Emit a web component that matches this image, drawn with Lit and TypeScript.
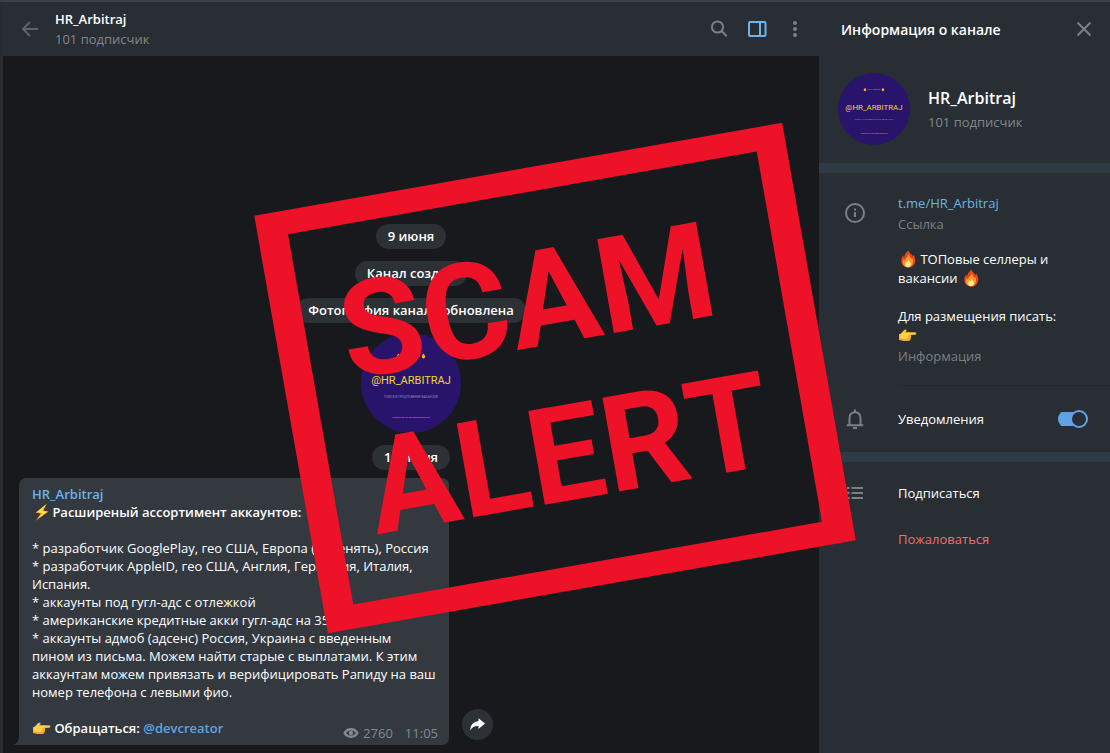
import { LitElement, html, css, svg } from "lit";
import { customElement, property, state } from "lit/decorators.js";

@customElement("emoji-glyph")
class EmojiGlyph extends LitElement {
  @property() name = "fire";

  static styles = css`
    :host {
      display: inline-block;
      width: 19px;
      height: 18px;
      vertical-align: -4px;
    }
    :host([name="bolt"]) {
      width: 17px;
    }
    svg {
      display: block;
      width: 19px;
      height: 18px;
    }
  `;

  render() {
    const shapes: Record<string, unknown> = {
      fire: svg`
        <path fill="#e8471c" d="M10.400 0.600c.5 2.300 3 3.500 4.300 5.600.3-.5.4-1 .4-1.600 1.700 2 2.300 4.200 2.100 6.600-.3 3.700-3 6.300-6.800 6.400-3.900.1-7-2.600-7.100-6.300C3.200 8.700 4.200 7 5.200 5.300c.1 1 .4 1.700 1 2.200C6.300 4.800 8 2.900 10.400.6z"/>
        <path fill="#fb9a2a" d="M10.900 4.500c.2 2 2 3.200 3 4.700.3-.4.5-.7.6-1.100 1.600 4.200-.2 8.900-4.300 9.100-3.700.1-6-2.700-5.300-6.100.2-.9.5-1.600 1-2.300.2 1 .5 1.500 1 1.900.3-2.500 2.600-3.400 4-6.200z"/>
        <path fill="#ffe98a" d="M10.500 9.500c.4 1.600 2.700 2.800 2.500 5-.2 1.800-1.400 2.700-3 2.700-1.700 0-2.900-1.100-2.900-2.800 0-1.500 1-2.100 1.700-3.100.3.7.5.9.8 1.100.3-1 .7-1.700.9-2.900z"/>`,
      bolt: svg`
        <path fill="#f6a623" d="M15 0.500 3.600 9.700l5.200.8-5 7.300L16.500 8.400l-5.200-.9z"/>
        <path fill="#ffe14d" d="M13.800 1.800 4.900 9.100l5.200.8-3.500 5.300 8.400-6.400-5-.8z"/>`,
      hand: svg`
        <path fill="#f2a928" d="M1 8.200c1.600-.4 2.500-1.500 3.700-2.800 1-1 2.500-2.300 3.600-1.700.7.5.2 1.600-.5 2.400l9.500.1c1.500.1 1.500 2.300 0 2.500l-4.700.3c1 .4 1 1.700.1 2.100.7.7.3 1.700-.4 2 .3.900-.2 1.700-1.300 1.800-3 .2-5.700.2-7.600-.4-.9-.3-1.500-.6-2.400-.6z"/>
        <path fill="#ffcf55" d="M1.600 8.600c1.700-.6 2.800-1.800 3.900-3 .9-.9 1.800-1.500 2.300-1.300.2.5-.6 1.400-1.600 2.700l10.900.1c.8.1.8 1 0 1.100l-5.600.4c-.6.8-1.900.7-2.500.5 1 .6 2 .7 2.700.7-.2 1-1.600.9-2.500.6.7.7 1.300.9 1.900.9-.4.8-1.300.8-2.200.7.4.5.8.7 1.200.8-2.500.2-4.500.2-6.200-.4-.8-.3-1.500-.5-2.300-.5z"/>`,
    };
    return html`<svg viewBox="0 0 19 18" aria-hidden="true">${shapes[this.name]}</svg>`;
  }
}

@customElement("channel-avatar")
class ChannelAvatar extends LitElement {
  static styles = css`
    :host {
      display: block;
      border-radius: 50%;
      overflow: hidden;
      background: #28156b;
    }
    svg {
      display: block;
      width: 100%;
      height: 100%;
    }
    text {
      font-family: Roboto, sans-serif;
      text-anchor: middle;
    }
    .handle {
      font-size: 11px;
      fill: #efd72f;
    }
    .soft {
      font-size: 3px;
      fill: #9184bd;
    }
    .tiny {
      font-size: 2px;
      fill: #d9d2ee;
    }
    .gold {
      fill: #dcae45;
    }
  `;

  render() {
    return html`<svg viewBox="0 0 100 100">
      <path fill="#ffae2b" d="M37.500 20.500l1.700 2.500c.2 1.500-.6 2.400-1.700 2.400s-1.900-.9-1.700-2.400z" />
      <path fill="#ffae2b" d="M62.500 20.500l1.700 2.500c.2 1.500-.6 2.400-1.700 2.400s-1.900-.9-1.700-2.400z" />
      <text class="soft" x="50" y="24">ТОП РАБОТА</text>
      <text class="handle" x="50" y="51">@HR_ARBITRAJ</text>
      <text class="soft" x="50" y="65">ПОИСК И ПРЕДЛОЖЕНИЕ ВАКАНСИЙ</text>
      <text class="tiny gold" x="50" y="85">ПИШИТЕ ПО КОНТАКТАМ В ОПИСАНИИ</text>
    </svg>`;
  }
}

@customElement("chat-view")
class ChatView extends LitElement {
  static styles = css`
    :host {
      display: flex;
      flex-direction: column;
      min-width: 0;
      background: #18191d;
      border-left: 3px solid #282b30;
    }
    .bar {
      display: flex;
      align-items: center;
      height: 54px;
      padding: 0 14px 0 16px;
      background: #282e33;
      box-sizing: border-box;
    }
    button {
      display: grid;
      place-items: center;
      padding: 0;
      border: 0;
      background: none;
      color: #7b8084;
    }
    .back {
      width: 22px;
      height: 22px;
      margin-right: 14px;
      color: #5e6367;
    }
    .who {
      flex: 1;
    }
    h1 {
      margin: 0;
      font-size: 13px;
      line-height: 20px;
      font-weight: 600;
      color: #ffffff;
    }
    .sub {
      margin: 0;
      font-size: 13px;
      line-height: 20px;
      color: #82878b;
    }
    .tools {
      display: flex;
      gap: 18px;
    }
    .tools button {
      width: 20px;
      height: 20px;
    }
    .tools .on {
      color: #6bb5ea;
    }
    .feed {
      flex: 1;
      display: flex;
      flex-direction: column;
      justify-content: flex-end;
      align-items: center;
      gap: 12px;
      padding-bottom: 8px;
    }
    .pill {
      padding: 0 12px;
      border-radius: 13px;
      background: #2c3136;
      color: #ffffff;
      font-size: 13px;
      font-weight: 600;
      line-height: 25px;
    }
    channel-avatar {
      width: 100px;
      height: 100px;
      margin-top: -2px;
    }
    .row {
      align-self: stretch;
      display: flex;
      align-items: flex-end;
      gap: 13px;
      margin: -4px 16px 0 10px;
    }
    .message {
      display: flex;
      align-items: flex-end;
    }
    .tail {
      display: block;
      width: 6px;
      height: 8px;
      fill: #33393f;
    }
    .bubble {
      width: 406px;
      padding: 7px 11px 3px 13px;
      border-radius: 7px 7px 7px 0;
      background: #33393f;
      color: #ffffff;
      font-size: 13px;
      line-height: 18px;
    }
    .bubble p {
      margin: 0;
    }
    .bubble .gap {
      margin-top: 18px;
    }
    a {
      color: #5da5e8;
      text-decoration: none;
    }
    .author,
    .strong {
      font-weight: 600;
    }
    .author {
      color: #6ab3e8;
    }
    .last {
      display: flex;
      justify-content: space-between;
      height: 23px;
      margin-top: 18px;
    }
    .meta {
      display: flex;
      align-items: center;
      align-self: flex-end;
      gap: 4px;
      color: #828a91;
    }
    time {
      margin-left: 8px;
    }
    .share {
      width: 31px;
      height: 31px;
      margin-bottom: 5px;
      border-radius: 50%;
      background: #2c3136;
      color: #ffffff;
    }
  `;

  render() {
    return html`
      <header class="bar">
        <button class="back" aria-label="Назад">
          <svg width="18" height="18" viewBox="0 0 18 18" fill="none" stroke="currentColor" stroke-width="2">
            <path d="M9 2 2 9l7 7M2 9h15" />
          </svg>
        </button>
        <div class="who">
          <h1>HR_Arbitraj</h1>
          <p class="sub">101 подписчик</p>
        </div>
        <div class="tools">
          <button aria-label="Поиск">
            <svg width="20" height="20" viewBox="0 0 20 20" fill="none" stroke="currentColor" stroke-width="2">
              <circle cx="8.500" cy="8" r="5.600" />
              <path d="m12.500 12 5.300 5.300" />
            </svg>
          </button>
          <button class="on" aria-label="Панель">
            <svg width="20" height="20" viewBox="0 0 20 20" fill="none" stroke="currentColor" stroke-width="2">
              <rect x="2" y="3" width="16.500" height="14" rx="1" />
              <path d="M13 3v14" />
            </svg>
          </button>
          <button aria-label="Меню">
            <svg width="20" height="20" viewBox="0 0 20 20" fill="currentColor">
              <circle cx="10" cy="4" r="2" />
              <circle cx="10" cy="10" r="2" />
              <circle cx="10" cy="16" r="2" />
            </svg>
          </button>
        </div>
      </header>
      <main class="feed">
        <div class="pill">9 июня</div>
        <div class="pill">Канал создан</div>
        <div class="pill">Фотография канала обновлена</div>
        <channel-avatar></channel-avatar>
        <div class="pill">10 июня</div>
        <div class="row">
          <article class="message">
            <svg class="tail" viewBox="0 0 6 8"><path d="M6 0v8H0C3.500 6.500 6 4 6 0z" /></svg>
            <div class="bubble">
              <p class="author">HR_Arbitraj</p>
              <p class="strong"><emoji-glyph name="bolt"></emoji-glyph> Расширеный ассортимент аккаунтов:</p>
              <p class="gap">* разработчик GooglePlay, гео США, Европа (заменять), Россия</p>
              <p>* разработчик AppleID, гео США, Англия, Германия, Италия, Испания.</p>
              <p>* аккаунты под гугл-адс с отлежкой</p>
              <p>* американские кредитные акки гугл-адс на 350$</p>
              <p>
                * аккаунты адмоб (адсенс) Россия, Украина с введенным<br />
                пином из письма. Можем найти старые с выплатами. К этим<br />
                аккаунтам можем привязать и верифицировать Рапиду на ваш<br />
                номер телефона с левыми фио.
              </p>
              <div class="last">
                <span class="strong"><emoji-glyph name="hand"></emoji-glyph> Обращаться: <a href="#devcreator">@devcreator</a></span>
                <span class="meta">
                  <svg width="16" height="16" viewBox="0 0 16 16" fill="none" stroke="currentColor">
                    <path stroke-width="2.500" d="M1.700 8C4.500 3 11.500 3 14.300 8 11.500 13 4.500 13 1.700 8z" />
                    <circle cx="8" cy="8" r="2.200" fill="currentColor" stroke="none" />
                  </svg>
                  <span>2760</span>
                  <time>11:05</time>
                </span>
              </div>
            </div>
          </article>
          <button class="share" aria-label="Поделиться">
            <svg width="17" height="15" viewBox="0 0 17 15" fill="currentColor">
              <path d="M9.500 1.200 16 6.600l-6.500 5.500V9C5.500 8.800 3 10.200 1.300 13.500 1.300 8.200 4.200 4.500 9.500 4.200z" />
            </svg>
          </button>
        </div>
      </main>
    `;
  }
}

@customElement("channel-info")
class ChannelInfo extends LitElement {
  @state() private notify = true;

  static styles = css`
    :host {
      display: block;
      background: #282e33;
      color: #ffffff;
      font-size: 13px;
      line-height: 19px;
    }
    .head {
      display: flex;
      align-items: center;
      justify-content: space-between;
      height: 54px;
      padding: 0 17px 0 22px;
    }
    h2 {
      margin: 0;
      font-size: 14px;
      font-weight: 600;
    }
    .close {
      display: grid;
      padding: 0;
      border: 0;
      background: none;
      color: #70757a;
    }
    .profile {
      display: flex;
      align-items: center;
      gap: 18px;
      padding: 17px 19px 18px;
    }
    .names {
      padding-top: 2px;
    }
    channel-avatar {
      width: 72px;
      height: 72px;
    }
    h3 {
      margin: 0;
      font-size: 16px;
      line-height: 24px;
      font-weight: 600;
    }
    p {
      margin: 0;
    }
    .sub {
      line-height: 24px;
      color: #82878b;
    }
    .divider {
      height: 10px;
      background: #2f3b43;
    }
    .about,
    .item {
      display: grid;
      grid-template-columns: 34px 1fr auto;
      column-gap: 23px;
      padding: 0 22px;
    }
    .about {
      grid-template-columns: 34px 1fr;
      padding: 21px 22px 17px;
    }
    svg {
      color: #7b8084;
    }
    .about > svg {
      margin: 8px 0 0 3px;
    }
    a {
      color: #6ab3e8;
      text-decoration: none;
    }
    .caption {
      line-height: 23px;
      color: #7b8084;
    }
    .text {
      margin-top: 14px;
    }
    .rule {
      height: 1px;
      margin-left: 79px;
      background: #24292e;
    }
    .item {
      align-items: center;
      height: 46px;
    }
    .item > svg {
      margin-left: 3px;
    }
    .notify {
      height: 66px;
    }
    .switch {
      appearance: none;
      display: grid;
      align-items: center;
      width: 30px;
      height: 18px;
      margin: 0;
      border-radius: 9px;
      background: linear-gradient(#5fa3e4, #5fa3e4) 0 50% / 24px 14px no-repeat;
    }
    .switch::after {
      content: "";
      box-sizing: border-box;
      width: 18px;
      height: 18px;
      border: 2px solid #5fa3e4;
      border-radius: 50%;
      background: #282e33;
    }
    .switch:checked::after {
      justify-self: end;
    }
    .actions {
      padding-top: 8px;
    }
    .action {
      grid-column: 2;
      padding: 0;
      border: 0;
      background: none;
      color: inherit;
      font: inherit;
      text-align: left;
    }
    .danger {
      color: #f0706f;
    }
  `;

  private toggle(e: Event) {
    this.notify = (e.target as HTMLInputElement).checked;
  }

  render() {
    return html`
      <header class="head">
        <h2>Информация о канале</h2>
        <button class="close" aria-label="Закрыть">
          <svg width="18" height="18" viewBox="0 0 18 18" fill="none" stroke="currentColor" stroke-width="2">
            <path d="m2.500 2.500 13 13M15.500 2.500l-13 13" />
          </svg>
        </button>
      </header>
      <section class="profile">
        <channel-avatar></channel-avatar>
        <div class="names">
          <h3>HR_Arbitraj</h3>
          <p class="sub">101 подписчик</p>
        </div>
      </section>
      <div class="divider"></div>
      <section class="about">
        <svg width="22" height="22" viewBox="0 0 22 22" fill="none" stroke="currentColor" stroke-width="2">
          <circle cx="11" cy="11" r="9" />
          <path d="M11 10v5M11 6.500v2" />
        </svg>
        <div>
          <p><a href="#channel">t.me/HR_Arbitraj</a></p>
          <p class="caption">Ссылка</p>
          <p class="text">
            <emoji-glyph name="fire"></emoji-glyph> ТОПовые селлеры и<br />
            вакансии <emoji-glyph name="fire"></emoji-glyph><br />
            <br />
            Для размещения писать:<br />
            <emoji-glyph name="hand"></emoji-glyph>
          </p>
          <p class="caption">Информация</p>
        </div>
      </section>
      <div class="rule"></div>
      <section class="item notify">
        <svg width="22" height="22" viewBox="0 0 22 22" fill="none" stroke="currentColor" stroke-width="2">
          <path d="M5.500 17V10c0-3.500 2.200-5.800 5.500-5.800s5.500 2.300 5.500 5.800v7M2.800 17.300h16.400M11 1.500V4" />
          <path d="M9 20h4" />
        </svg>
        <label for="notify">Уведомления</label>
        <input class="switch" id="notify" type="checkbox" .checked=${this.notify} @change=${this.toggle} />
      </section>
      <div class="divider"></div>
      <section class="actions">
        <div class="item">
          <svg width="22" height="22" viewBox="0 0 22 22" stroke="currentColor" stroke-width="2">
            <path d="M7.500 6H19M7.500 11H19M7.500 16H19M3 6h2.500M3 11h2.500M3 16h2.500" />
          </svg>
          <button class="action">Подписаться</button>
        </div>
        <div class="item">
          <button class="action danger">Пожаловаться</button>
        </div>
      </section>
    `;
  }
}

@customElement("app-root")
class AppRoot extends LitElement {
  static styles = css`
    :host {
      position: relative;
      display: grid;
      grid-template-columns: minmax(0, 1fr) 291px;
      min-height: 100vh;
      box-sizing: border-box;
      border-top: 2px solid #3b4148;
      background: #282e33;
      font-family: "Open Sans", "Noto Sans", sans-serif;
      overflow: hidden;
    }
    .overlay {
      position: absolute;
      inset: 0;
      display: grid;
      place-items: center;
      pointer-events: none;
    }
    .stamp {
      box-sizing: border-box;
      width: 536px;
      height: 424px;
      padding: 30px 0 0 35px;
      border: solid #ed1228;
      border-width: 24px 30px;
      transform: rotate(-10deg);
      color: #ed1228;
      font-family: Roboto, sans-serif;
      font-size: 134px;
      font-weight: 700;
      font-kerning: none;
      line-height: 157px;
      white-space: nowrap;
    }
  `;

  render() {
    return html`
      <chat-view></chat-view>
      <channel-info></channel-info>
      <div class="overlay">
        <div class="stamp">SCAM<br />ALERT</div>
      </div>
    `;
  }
}
